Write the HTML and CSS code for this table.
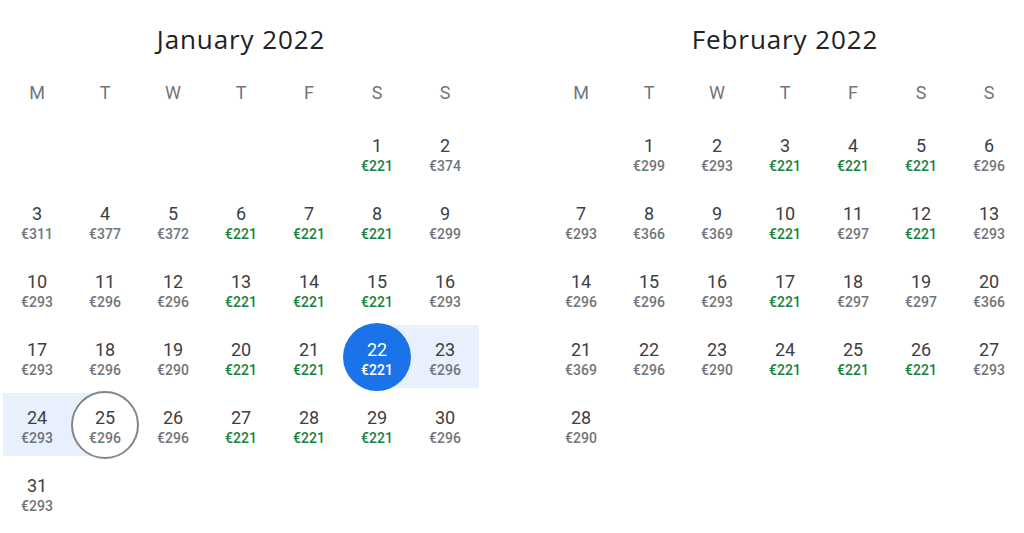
FILE: index.html
```html
<!DOCTYPE html>
<html>
<head>
<meta charset="utf-8">
<link rel="stylesheet" href="styles.css">
</head>
<body>
<div class="calendars">
  <section class="month">
    <h2 class="title">January 2022</h2>
    <div class="weekdays"><span>M</span><span>T</span><span>W</span><span>T</span><span>F</span><span>S</span><span>S</span></div>
    <div class="grid">
      <div class="day start-sat"><span class="num">1</span><span class="price low">€221</span></div>
      <div class="day"><span class="num">2</span><span class="price">€374</span></div>
      <div class="day"><span class="num">3</span><span class="price">€311</span></div>
      <div class="day"><span class="num">4</span><span class="price">€377</span></div>
      <div class="day"><span class="num">5</span><span class="price">€372</span></div>
      <div class="day"><span class="num">6</span><span class="price low">€221</span></div>
      <div class="day"><span class="num">7</span><span class="price low">€221</span></div>
      <div class="day"><span class="num">8</span><span class="price low">€221</span></div>
      <div class="day"><span class="num">9</span><span class="price">€299</span></div>
      <div class="day"><span class="num">10</span><span class="price">€293</span></div>
      <div class="day"><span class="num">11</span><span class="price">€296</span></div>
      <div class="day"><span class="num">12</span><span class="price">€296</span></div>
      <div class="day"><span class="num">13</span><span class="price low">€221</span></div>
      <div class="day"><span class="num">14</span><span class="price low">€221</span></div>
      <div class="day"><span class="num">15</span><span class="price low">€221</span></div>
      <div class="day"><span class="num">16</span><span class="price">€293</span></div>
      <div class="day"><span class="num">17</span><span class="price">€293</span></div>
      <div class="day"><span class="num">18</span><span class="price">€296</span></div>
      <div class="day"><span class="num">19</span><span class="price">€290</span></div>
      <div class="day"><span class="num">20</span><span class="price low">€221</span></div>
      <div class="day"><span class="num">21</span><span class="price low">€221</span></div>
      <div class="day range-start selected"><span class="num">22</span><span class="price low">€221</span></div>
      <div class="day in-range"><span class="num">23</span><span class="price">€296</span></div>
      <div class="day in-range"><span class="num">24</span><span class="price">€293</span></div>
      <div class="day range-end outlined"><span class="num">25</span><span class="price">€296</span></div>
      <div class="day"><span class="num">26</span><span class="price">€296</span></div>
      <div class="day"><span class="num">27</span><span class="price low">€221</span></div>
      <div class="day"><span class="num">28</span><span class="price low">€221</span></div>
      <div class="day"><span class="num">29</span><span class="price low">€221</span></div>
      <div class="day"><span class="num">30</span><span class="price">€296</span></div>
      <div class="day"><span class="num">31</span><span class="price">€293</span></div>
    </div>
  </section>
  <section class="month">
    <h2 class="title">February 2022</h2>
    <div class="weekdays"><span>M</span><span>T</span><span>W</span><span>T</span><span>F</span><span>S</span><span>S</span></div>
    <div class="grid">
      <div class="day start-tue"><span class="num">1</span><span class="price">€299</span></div>
      <div class="day"><span class="num">2</span><span class="price">€293</span></div>
      <div class="day"><span class="num">3</span><span class="price low">€221</span></div>
      <div class="day"><span class="num">4</span><span class="price low">€221</span></div>
      <div class="day"><span class="num">5</span><span class="price low">€221</span></div>
      <div class="day"><span class="num">6</span><span class="price">€296</span></div>
      <div class="day"><span class="num">7</span><span class="price">€293</span></div>
      <div class="day"><span class="num">8</span><span class="price">€366</span></div>
      <div class="day"><span class="num">9</span><span class="price">€369</span></div>
      <div class="day"><span class="num">10</span><span class="price low">€221</span></div>
      <div class="day"><span class="num">11</span><span class="price">€297</span></div>
      <div class="day"><span class="num">12</span><span class="price low">€221</span></div>
      <div class="day"><span class="num">13</span><span class="price">€293</span></div>
      <div class="day"><span class="num">14</span><span class="price">€296</span></div>
      <div class="day"><span class="num">15</span><span class="price">€296</span></div>
      <div class="day"><span class="num">16</span><span class="price">€293</span></div>
      <div class="day"><span class="num">17</span><span class="price low">€221</span></div>
      <div class="day"><span class="num">18</span><span class="price">€297</span></div>
      <div class="day"><span class="num">19</span><span class="price">€297</span></div>
      <div class="day"><span class="num">20</span><span class="price">€366</span></div>
      <div class="day"><span class="num">21</span><span class="price">€369</span></div>
      <div class="day"><span class="num">22</span><span class="price">€296</span></div>
      <div class="day"><span class="num">23</span><span class="price">€290</span></div>
      <div class="day"><span class="num">24</span><span class="price low">€221</span></div>
      <div class="day"><span class="num">25</span><span class="price low">€221</span></div>
      <div class="day"><span class="num">26</span><span class="price low">€221</span></div>
      <div class="day"><span class="num">27</span><span class="price">€293</span></div>
      <div class="day"><span class="num">28</span><span class="price">€290</span></div>
    </div>
  </section>
</div>
</body>
</html>
```
FILE: styles.css
```css
html, body {
  margin: 0;
  padding: 0;
  background: #ffffff;
}

body {
  font-family: Roboto, "Liberation Sans", Arial, sans-serif;
  color: #3c4043;
}

.calendars {
  display: flex;
  gap: 68px;
  padding-left: 3px;
}

.month {
  width: 476px;
}

.title {
  margin: 0;
  padding-top: 23px;
  line-height: 32px;
  font-family: "Open Sans", Roboto, sans-serif;
  font-size: 26px;
  font-weight: 400;
  text-align: center;
  color: #202124;
  letter-spacing: 0.9px;
}

.weekdays {
  display: grid;
  grid-template-columns: repeat(7, 68px);
  margin-top: 18px;
  line-height: 40px;
  font-size: 18px;
  color: #70757a;
  text-align: center;
}

.grid {
  display: grid;
  grid-template-columns: repeat(7, 68px);
  grid-auto-rows: 68px;
  margin-top: 6px;
}

.start-sat { grid-column-start: 6; }
.start-tue { grid-column-start: 2; }

.day {
  position: relative;
  display: flex;
  flex-direction: column;
  align-items: center;
  justify-content: center;
  z-index: 0;
  padding-top: 1px;
}

.num {
  font-size: 18px;
  line-height: 24px;
  color: #3c4043;
}

.price {
  font-size: 14px;
  line-height: 16px;
  font-weight: 500;
  color: #70757a;
}

.price.low {
  color: #188038;
}

.in-range::before,
.range-start::before,
.range-end::before {
  content: "";
  position: absolute;
  top: 2px;
  bottom: 3px;
  left: 0;
  right: 0;
  background: #e8f0fe;
  z-index: -2;
}

.range-start::before { left: 50%; }
.range-end::before { right: 50%; }

.selected::after,
.outlined::after {
  content: "";
  position: absolute;
  top: 0;
  left: 0;
  width: 68px;
  height: 68px;
  box-sizing: border-box;
  border-radius: 50%;
  z-index: -1;
}

.selected::after {
  background: #1a73e8;
}

.selected .num,
.selected .price,
.selected .price.low {
  color: #ffffff;
}

.outlined::after {
  background: #ffffff;
  border: 2px solid #80868b;
}
```
